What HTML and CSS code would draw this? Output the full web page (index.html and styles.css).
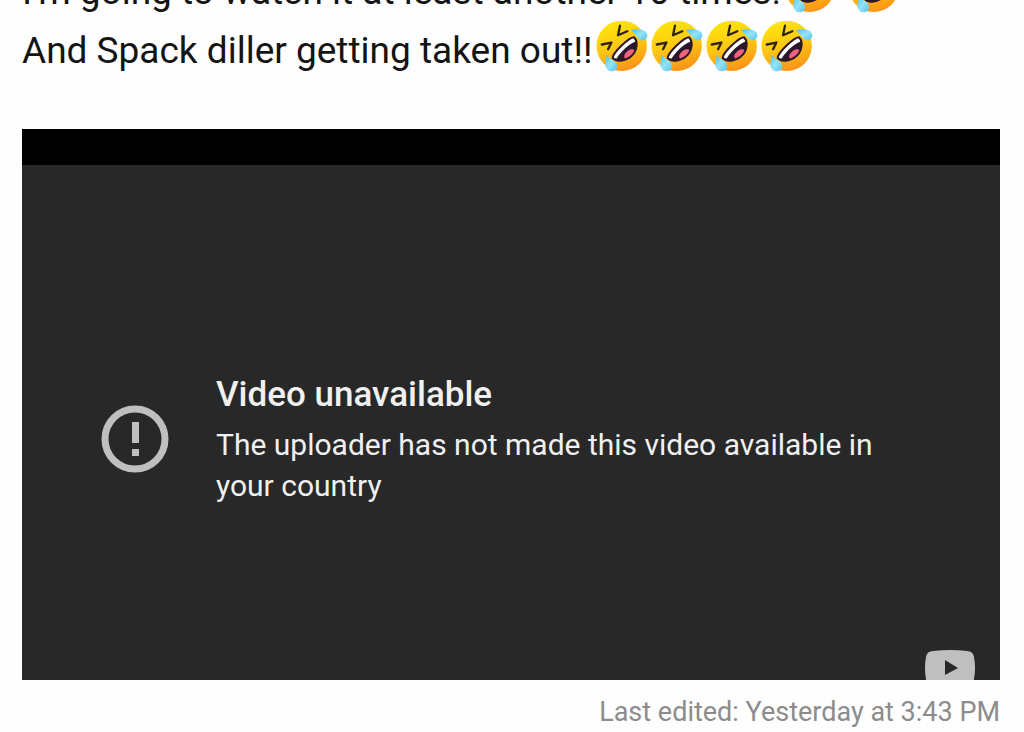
FILE: index.html
```html
<!DOCTYPE html>
<html lang="en">
<head>
<meta charset="utf-8">
<meta name="viewport" content="width=device-width, initial-scale=1">
<title>Forum post</title>
<link rel="stylesheet" href="styles.css">
</head>
<body>
<svg class="defs" aria-hidden="true">
  <defs>
    <linearGradient id="face" x1="0.3" y1="0" x2="0.6" y2="1">
      <stop offset="0" stop-color="#fde60c"/>
      <stop offset="0.5" stop-color="#fdc813"/>
      <stop offset="1" stop-color="#fb9218"/>
    </linearGradient>
    <linearGradient id="tear" x1="0" y1="0" x2="1" y2="1">
      <stop offset="0" stop-color="#4dbfe8"/>
      <stop offset="0.5" stop-color="#93e4fa"/>
      <stop offset="1" stop-color="#58c2ea"/>
    </linearGradient>
    <clipPath id="mouth-clip"><path d="M50 118C50 102 98 56 114 55C128 68 124 98 104 114C86 128 60 130 50 118Z"/></clipPath>
    <symbol id="rofl" viewBox="0 0 156 160">
      <circle cx="77" cy="81" r="76" fill="url(#face)"/>
      <path d="M72 20L66 49L94 37M17 77L46 71L36 91" fill="none" stroke="#302410" stroke-width="7" stroke-linecap="round" stroke-linejoin="round"/>
      <g clip-path="url(#mouth-clip)">
        <path d="M40 50h90v90H40z" fill="#2d172b"/>
        <path d="M48 118C50 98 98 54 114 55L119 68C98 76 75 98 62 119Z" fill="#fff"/>
        <ellipse cx="101" cy="106" rx="19" ry="11" transform="rotate(-38 101 106)" fill="#ef6280"/>
      </g>
      <path d="M50 118C50 102 98 56 114 55C128 68 124 98 104 114C86 128 60 130 50 118Z" fill="none" stroke="#2d172b" stroke-width="6"/>
      <path d="M105 34C116 29 132 31 142 34C155 38 158 51 151 59C145 67 134 66 127 58C119 48 114 42 105 34Z" fill="url(#tear)"/>
      <path d="M30 107C37 117 55 124 61 134C68 148 58 158 46 158C33 157 27 147 28 133C29 124 32 117 30 107Z" fill="url(#tear)"/>
    </symbol>
  </defs>
</svg>
<main class="post">
  <p class="message">I'm going to watch it at least another 10 times!<svg class="emoji" role="img" aria-label="Rolling on the floor laughing"><use href="#rofl"/></svg> <svg class="emoji" role="img" aria-label="Rolling on the floor laughing"><use href="#rofl"/></svg><br>And Spack diller getting taken out!!<svg class="emoji" role="img" aria-label="Rolling on the floor laughing"><use href="#rofl"/></svg><svg class="emoji" role="img" aria-label="Rolling on the floor laughing"><use href="#rofl"/></svg><svg class="emoji" role="img" aria-label="Rolling on the floor laughing"><use href="#rofl"/></svg><svg class="emoji" role="img" aria-label="Rolling on the floor laughing"><use href="#rofl"/></svg></p>
  <section class="player">
    <div class="notice">
      <svg class="alert" viewBox="0 0 68 68" aria-hidden="true">
        <circle cx="34" cy="34" r="30" fill="none" stroke="currentColor" stroke-width="7"/>
        <path d="M31 17h7v21h-7zM31 44h7v7h-7z" fill="currentColor"/>
      </svg>
      <div class="reason">
        <h2 class="title">Video unavailable</h2>
        <p class="detail">The uploader has not made this video available in your country</p>
      </div>
    </div>
    <button class="watch" type="button" aria-label="Watch on YouTube">
      <svg class="watch-icon" viewBox="0 0 50 36" aria-hidden="true">
        <path d="M8 1Q25 -1 42 1Q48 1 49 7Q51 18 49 29Q48 35 42 35Q25 37 8 35Q2 35 1 29Q-1 18 1 7Q2 1 8 1Z" fill="#bfbfbf"/>
        <path d="M20 10L33 18L20 25Z" fill="#282828"/>
      </svg>
    </button>
  </section>
  <p class="edited">Last edited: Yesterday at 3:43 PM</p>
</main>
</body>
</html>
```
FILE: styles.css
```css
* {
  box-sizing: border-box;
}

body {
  margin: 0;
  background: #fefefe;
  color: #141414;
  font-family: Roboto, "Liberation Sans", sans-serif;
  overflow: hidden;
}

.defs {
  display: block;
  width: 0;
  height: 0;
}

.post {
  padding: 0 24px 0 22px;
  margin-top: -38px;
}

.message {
  margin: 0 0 49px;
  font-size: 37px;
  line-height: 59px;
}

.emoji {
  display: inline-block;
  width: 52px;
  height: 53px;
  margin: -8px 0 0 3px;
  vertical-align: -9px;
}

.player {
  display: flex;
  flex-direction: column;
  height: 551px;
  overflow: hidden;
  border-top: 36px solid #000;
  background: #282828;
}

.notice {
  display: flex;
  flex: none;
  align-items: center;
  gap: 47px;
  padding: 206px 100px 0 79px;
}

.alert {
  flex: none;
  width: 68px;
  height: 68px;
  color: #bfbfbf;
}

.title,
.detail {
  margin: 0;
  color: #f0f0f0;
}

.title {
  font-size: 35px;
  font-weight: 500;
  line-height: 48px;
  margin-bottom: 5px;
}

.detail {
  font-size: 30px;
  line-height: 41px;
}

.watch {
  flex: none;
  align-self: flex-end;
  margin: 144px 25px 0 0;
  padding: 0;
  border: 0;
  background: none;
}

.watch-icon {
  display: block;
  width: 50px;
  height: 36px;
}

.edited {
  margin: 14px 0 0;
  color: #8c8c8c;
  font-size: 27px;
  line-height: 36px;
  text-align: right;
}
```
